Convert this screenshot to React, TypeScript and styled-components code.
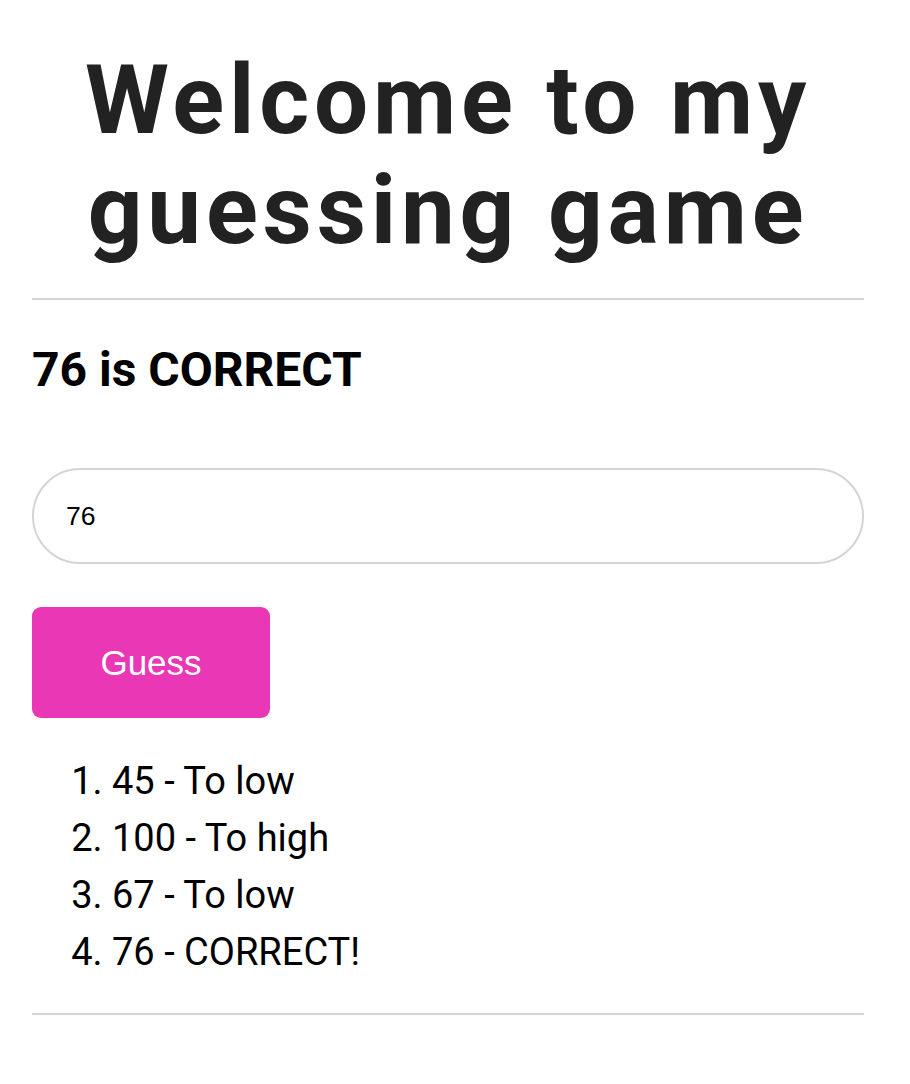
import React from "react";
import styled, { createGlobalStyle } from "styled-components";

const GlobalStyle = createGlobalStyle`
  html, body { margin: 0; padding: 0; background: #ffffff; }
  body { font-family: Roboto, "Noto Sans", sans-serif; color: #000; }
`;

const Page = styled.main`
  padding: 0 46px 0 32px;
  display: flex;
  flex-direction: column;
`;

const Title = styled.h1`
  margin: 45px 0 33px;
  font-family: Roboto, sans-serif;
  font-weight: 700;
  font-size: 96px;
  line-height: 110px;
  letter-spacing: 4.8px;
  color: #222222;
  text-align: center;
`;

const Rule = styled.hr`
  margin: 0;
  border: 0;
  height: 2px;
  background: #d4d4d4;
`;

const Status = styled.h2`
  margin: 42px 0 0;
  font-family: Roboto, sans-serif;
  font-weight: 700;
  font-size: 48px;
  line-height: 56px;
  color: #000;
`;

const GuessInput = styled.input`
  margin-top: 70px;
  box-sizing: border-box;
  height: 96px;
  width: 100%;
  border: 2px solid #d4d4d4;
  border-radius: 48px;
  padding: 0 32px;
  font-family: "Liberation Sans", Arial, sans-serif;
  font-size: 26.67px;
  color: #000;
  outline: none;
  background: #fff;
`;

const GuessButton = styled.button`
  margin-top: 43px;
  align-self: flex-start;
  box-sizing: border-box;
  width: 238px;
  height: 111px;
  border: 0;
  border-radius: 9px;
  background: #e937b5;
  color: #ffffff;
  font-family: "Liberation Sans", Arial, sans-serif;
  font-size: 35px;
  cursor: pointer;
`;

const History = styled.ol`
  margin: 35px 0 0;
  padding-left: 80px;
  font-family: Roboto, sans-serif;
  font-size: 38px;
  line-height: 57px;
  color: #000;
`;

const Entry = styled.li``;

const BottomRule = styled(Rule)`
  margin-top: 32px;
`;

const guesses = [
  { value: 45, result: "To low" },
  { value: 100, result: "To high" },
  { value: 67, result: "To low" },
  { value: 76, result: "CORRECT!" },
];

export default function App() {
  return (
    <>
      <GlobalStyle />
      <Page>
        <Title>Welcome to my guessing game</Title>
        <Rule />
        <Status>76 is CORRECT</Status>
        <GuessInput type="text" defaultValue="76" />
        <GuessButton type="button">Guess</GuessButton>
        <History>
          {guesses.map((g) => (
            <Entry key={g.value}>
              {g.value} - {g.result}
            </Entry>
          ))}
        </History>
        <BottomRule />
      </Page>
    </>
  );
}
